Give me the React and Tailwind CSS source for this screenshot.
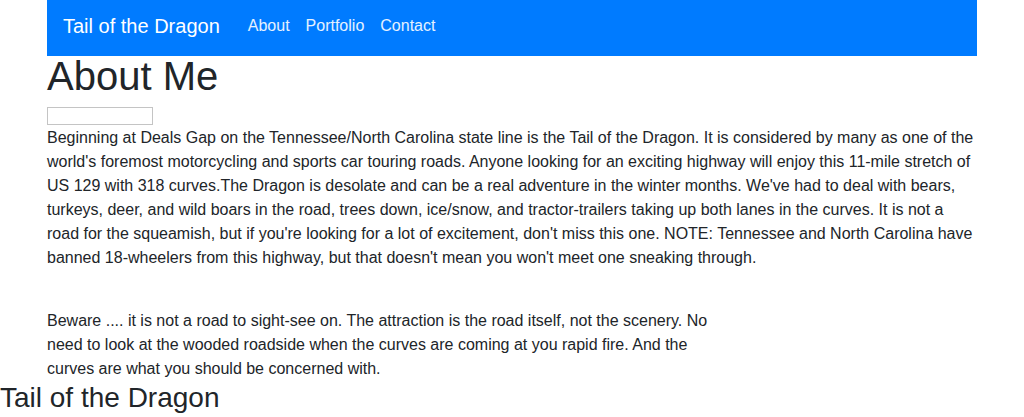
import React from 'react';

const links = ['About', 'Portfolio', 'Contact'];

const App = () => {
  return (
    <div className="bg-white text-[#212529] font-['Liberation_Sans',Arial,sans-serif]">
      <div className="mx-auto w-[930px]">
        {/* Navbar */}
        <nav className="flex h-14 items-center bg-[#007bff] px-4">
          <span className="mr-4 -mt-[4px] text-[20px] leading-[30px] text-white">Tail of the Dragon</span>
          <ul className="ml-[4px] -mt-[4px] flex">
            {links.map((link) => (
              <li key={link} className="px-2 text-base leading-6 text-white/90">
                {link}
              </li>
            ))}
          </ul>
        </nav>

        <h1 className="text-[40px] leading-[40px]">About Me</h1>
        <div className="mt-[11px] h-[18px] w-[106px] border border-[#c4c4c4]" />

        <p className="mt-[1px] mb-[39px] text-base leading-6">
          Beginning at Deals Gap on the Tennessee/North Carolina state line is the Tail of the Dragon. It is considered by many as one of the world's foremost motorcycling and sports car touring roads. Anyone looking for an exciting highway will enjoy this 11-mile stretch of US 129 with 318 curves.The Dragon is desolate and can be a real adventure in the winter months. We've had to deal with bears, turkeys, deer, and wild boars in the road, trees down, ice/snow, and tractor-trailers taking up both lanes in the curves. It is not a road for the squeamish, but if you're looking for a lot of excitement, don't miss this one. NOTE: Tennessee and North Carolina have banned 18-wheelers from this highway, but that doesn't mean you won't meet one sneaking through.
        </p>

        <p className="w-[680px] text-base leading-6">
          Beware .... it is not a road to sight-see on. The attraction is the road itself, not the scenery. No need to look at the wooded roadside when the curves are coming at you rapid fire. And the curves are what you should be concerned with.
        </p>
      </div>

      <h3 className="text-[28px] leading-[34px]">Tail of the Dragon</h3>
    </div>
  );
};

export default App;
